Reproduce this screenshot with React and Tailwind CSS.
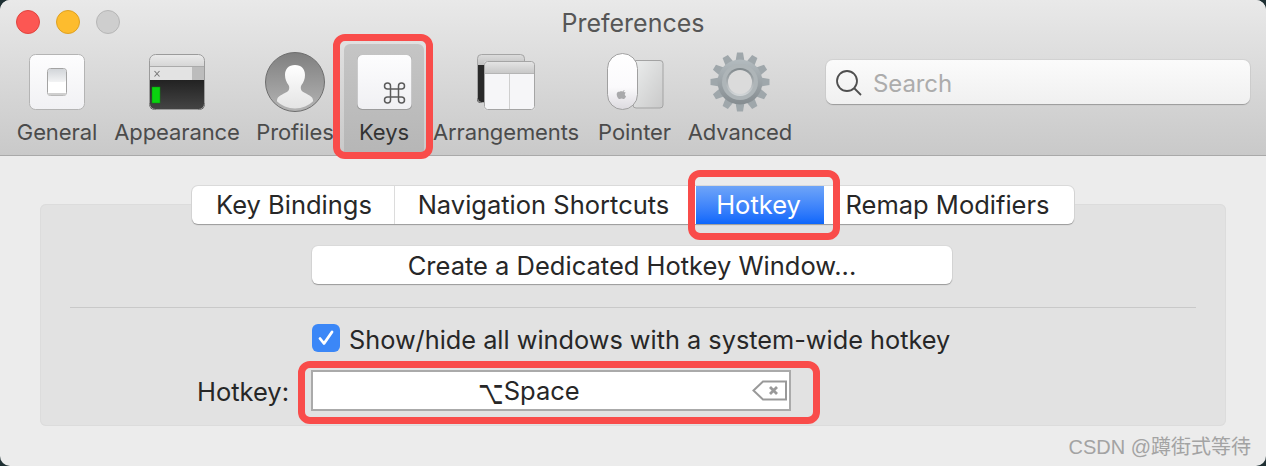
import React from "react";

function GeneralIcon() {
  return (
    <svg width="60" height="60" viewBox="0 0 60 60">
      <defs>
        <linearGradient id="gk" x1="0" y1="0" x2="0" y2="1"><stop offset="0" stopColor="#fdfdfe"/><stop offset="1" stopColor="#f1f1f4"/></linearGradient>
        <linearGradient id="gs" x1="0" y1="0" x2="0" y2="1"><stop offset="0" stopColor="#d2d5d9"/><stop offset="1" stopColor="#f2f3f4"/></linearGradient>
      </defs>
      <rect x="2.5" y="2.5" width="55" height="55" rx="6" fill="url(#gk)" stroke="#b4b4b4"/>
      <rect x="20.5" y="16.5" width="19" height="27" rx="3" fill="#fff" stroke="#a3a3a3"/>
      <rect x="21" y="17" width="18" height="13" rx="2.5" fill="url(#gs)"/>
      <rect x="21" y="41" width="18" height="2.5" rx="1" fill="#cfcfcf"/>
    </svg>
  );
}

function AppearanceIcon() {
  return (
    <svg width="60" height="60" viewBox="0 0 60 60">
      <defs>
        <linearGradient id="at" x1="0" y1="0" x2="0" y2="1"><stop offset="0" stopColor="#ececec"/><stop offset="1" stopColor="#d4d4d4"/></linearGradient>
        <linearGradient id="ad" x1="0" y1="0" x2="0" y2="1"><stop offset="0" stopColor="#222"/><stop offset="1" stopColor="#454545"/></linearGradient>
        <clipPath id="ac"><rect x="2" y="2" width="56" height="56" rx="6"/></clipPath>
      </defs>
      <g clipPath="url(#ac)">
        <rect x="2" y="2" width="56" height="13" fill="url(#at)"/>
        <rect x="2" y="14" width="44" height="14" fill="#e3e3e3"/>
        <rect x="45" y="14" width="13" height="14" fill="#bcbcbc"/>
        <rect x="2" y="14" width="56" height="1" fill="#aaa"/>
        <rect x="2" y="28" width="56" height="30" fill="url(#ad)"/>
      </g>
      <rect x="2.5" y="2.5" width="55" height="55" rx="6" fill="none" stroke="#9b9b9b"/>
      <path d="M7.5 19l5 5.5m0-5.5l-5 5.5" stroke="#777" strokeWidth="1.1"/>
      <rect x="5" y="35" width="8" height="16" fill="#0ad30f" stroke="#0b8f0f" strokeWidth="0.5"/>
    </svg>
  );
}

function ProfileIcon() {
  return (
    <svg width="60" height="60" viewBox="0 0 60 60">
      <defs>
        <linearGradient id="pb" x1="0" y1="0" x2="0" y2="1"><stop offset="0" stopColor="#7f7f7f"/><stop offset="1" stopColor="#b4b4b4"/></linearGradient>
        <linearGradient id="pw" x1="0" y1="0" x2="0" y2="1"><stop offset="0" stopColor="#ffffff"/><stop offset="1" stopColor="#e2e2e2"/></linearGradient>
        <clipPath id="pc"><circle cx="30" cy="30" r="26.500"/></clipPath>
      </defs>
      <circle cx="30" cy="30" r="29.500" fill="url(#pb)" stroke="#6e6e6e"/>
      <g clipPath="url(#pc)">
        <path d="M30 13c-6.500 0-10 4-10 10 0 4 1.500 7.500 3.500 10 1 1.500 1 4 0 5.500-2 2.500-8 4-10.500 7-1.500 2-1.500 6 0 14h34c1.500-8 1.500-12 0-14-2.500-3-8.500-4.500-10.500-7-1-1.500-1-4 0-5.500 2-2.500 3.500-6 3.500-10 0-6-3.500-10-10-10z" fill="url(#pw)"/>
      </g>
    </svg>
  );
}

function KeyIcon() {
  return (
    <svg width="60" height="60" viewBox="0 0 60 60">
      <defs>
        <linearGradient id="kk" x1="0" y1="0" x2="0" y2="1"><stop offset="0" stopColor="#fdfdfe"/><stop offset="1" stopColor="#f0f0f3"/></linearGradient>
      </defs>
      <rect x="3" y="3" width="55" height="55" rx="5" fill="#9c9c9c"/>
      <rect x="3.500" y="3" width="54" height="54" rx="5" fill="url(#kk)"/>
      <path
        d="M36.500 37h8v8h-8zM36.500 37h-3a3 3 0 1 1 3-3zM44.500 37h3a3 3 0 1 0-3-3zM36.500 45h-3a3 3 0 1 0 3 3zM44.500 45h3a3 3 0 1 1-3 3z"
        fill="none"
        stroke="#5c5c5c"
        strokeWidth="1.500"
      />
    </svg>
  );
}

function ArrangeIcon() {
  return (
    <svg width="60" height="60" viewBox="0 0 60 60">
      <defs>
        <linearGradient id="rt" x1="0" y1="0" x2="0" y2="1"><stop offset="0" stopColor="#dedede"/><stop offset="1" stopColor="#c0c0c0"/></linearGradient>
        <linearGradient id="rb" x1="0" y1="0" x2="0" y2="1"><stop offset="0" stopColor="#e6e6e6"/><stop offset="1" stopColor="#c8c8c8"/></linearGradient>
        <clipPath id="rc"><rect x="1" y="2" width="48" height="49" rx="4"/></clipPath>
        <clipPath id="rf"><rect x="8" y="9" width="51" height="49" rx="3"/></clipPath>
      </defs>
      <g clipPath="url(#rc)">
        <rect x="1" y="2" width="48" height="12" fill="url(#rt)"/>
        <rect x="1" y="13" width="12" height="38" fill="#2a2a2a"/>
      </g>
      <rect x="1.500" y="2.500" width="47" height="48" rx="4" fill="none" stroke="#a5a5a5"/>
      <g clipPath="url(#rf)">
        <rect x="8" y="9" width="51" height="49" fill="#f6f6f8"/>
        <rect x="8" y="9" width="51" height="12" fill="url(#rb)"/>
        <rect x="33" y="21" width="1" height="37" fill="#cfcfcf"/>
        <rect x="8" y="21" width="51" height="1" fill="#b5b5b5"/>
      </g>
      <rect x="8.500" y="9.500" width="50" height="48" rx="3" fill="none" stroke="#a5a5a5"/>
    </svg>
  );
}

function PointerIcon() {
  return (
    <svg width="60" height="60" viewBox="0 0 60 60">
      <defs>
        <linearGradient id="mt" x1="0" y1="0" x2="1" y2="1"><stop offset="0" stopColor="#eceeee"/><stop offset="1" stopColor="#c9c9c9"/></linearGradient>
        <linearGradient id="mm" x1="0" y1="0" x2="0" y2="1"><stop offset="0" stopColor="#ffffff"/><stop offset="0.6" stopColor="#fbfafc"/><stop offset="1" stopColor="#dcdadf"/></linearGradient>
      </defs>
      <rect x="28" y="8.500" width="30" height="47.500" rx="3" fill="url(#mt)" stroke="#a3a3a3"/>
      <rect x="2.500" y="1.500" width="30" height="56" rx="15" fill="url(#mm)" stroke="#a0a0a0"/>
      <path d="M17.500 41c1-.6 2.200-.4 3-.1 .5-1 1.200-1.500 2-1.700 0 1-.6 1.800-1.500 2 1.400 0 2.400.3 2.800 1-1.400.8-1.400 3 .2 3.500-.5 1.500-1.500 2.800-2.500 2.800-.9 0-1.300-.5-2-.5s-1.200.5-2 .5c-1.500 0-3-3-3-5 0-1.800 1.200-2.700 2-2.500z" fill="#a9a9ab" transform="translate(-2.500 -.5) scale(.98)"/>
    </svg>
  );
}

function GearIcon() {
  const teeth = [0, 30, 60, 90, 120, 150, 180, 210, 240, 270, 300, 330];
  return (
    <svg width="60" height="60" viewBox="0 0 60 60">
      <defs>
        <linearGradient id="ga" x1="0" y1="0" x2="0" y2="1"><stop offset="0" stopColor="#b3bbbf"/><stop offset="1" stopColor="#858c90"/></linearGradient>
        <linearGradient id="gb" x1="0" y1="0" x2="0" y2="1"><stop offset="0" stopColor="#7f878b"/><stop offset="1" stopColor="#d4d8da"/></linearGradient>
      </defs>
      {teeth.map((a) => (
        <path key={a} d="M27 0.500h6l1.500 9h-9z" fill="#9fa7ab" transform={`rotate(${a} 30 30)`} />
      ))}
      <circle cx="30" cy="30" r="22.500" fill="url(#ga)"/>
      <circle cx="30" cy="30" r="18" fill="#aeb5b8"/>
      <circle cx="30" cy="30" r="14" fill="url(#gb)"/>
      <circle cx="30" cy="30" r="12" fill="#dbdbdb"/>
    </svg>
  );
}

const tools = [
  { label: "General", cls: "ml-[17px] w-[80px]", Icon: GeneralIcon },
  { label: "Appearance", cls: "ml-[18px] w-[124px]", Icon: AppearanceIcon },
  { label: "Profiles", cls: "ml-[18px] w-[76px]", Icon: ProfileIcon },
  { label: "Keys", cls: "ml-[11px] w-[80px] bg-gradient-to-b from-[#c5c5c5] to-[#b6b6b6] rounded-t-[6px] text-[#333333] relative", Icon: KeyIcon, active: true },
  { label: "Arrangements", cls: "ml-[9px] w-[146px]", Icon: ArrangeIcon },
  { label: "Pointer", cls: "ml-[19px] w-[73px]", Icon: PointerIcon },
  { label: "Advanced", cls: "ml-[18px] w-[102px]", Icon: GearIcon },
];

function Highlight({ cls }) {
  return <div className={`absolute border-[7px] border-[#f94c4a] rounded-[12px] pointer-events-none ${cls}`} />;
}

export default function App() {
  return (
    <div className="w-[1266px] h-[466px] bg-[#1f3033] overflow-hidden font-['Inter','Liberation_Sans',sans-serif]">
      <div className="w-full h-full bg-[#ececec] rounded-[10px] flex flex-col overflow-hidden">
        <header className="h-[156px] shrink-0 flex flex-col border-b border-[#a9a9a9] bg-gradient-to-b from-[#e9e9e9] to-[#c9c9c9]">
          <div className="h-[44px] shrink-0 grid grid-cols-[1fr_auto_1fr] items-center">
            <div className="flex gap-[16px] pl-[16px]">
              <span className="w-[24px] h-[24px] rounded-full bg-[#fc5753] border border-[#e0443e]" />
              <span className="w-[24px] h-[24px] rounded-full bg-[#fdbc2e] border border-[#dea123]" />
              <span className="w-[24px] h-[24px] rounded-full bg-[#cecece] border border-[#b6b6b6]" />
            </div>
            <div className="mt-[2px] text-[25px] leading-[30px] text-[#565656]">Preferences</div>
            <div />
          </div>
          <div className="flex-1 flex">
            {tools.map(({ label, cls, Icon, active }) => (
              <div key={label} className={`flex flex-col items-center pt-[8px] text-[22px] leading-[26px] tracking-[-0.1px] text-[#4b4b4b] ${cls}`}>
                <div className="w-[60px] h-[60px] shrink-0"><Icon /></div>
                <div className="mt-[7px] whitespace-nowrap">{label}</div>
                {active && <Highlight cls="left-[-11px] right-[-9px] top-[-10px] bottom-[-4px]" />}
              </div>
            ))}
            <div className="ml-[35px] mt-[16px] w-[424px] h-[44px] rounded-[7px] bg-gradient-to-b from-[#fbfbfb] to-[#f0f0f0] shadow-[0_1px_1px_#9a9a9a,0_0_0_1px_#d2d2d2] flex items-center pl-[9px] gap-[10px]">
              <svg className="mt-[2px]" width="28" height="28" viewBox="0 0 28 28" fill="none" stroke="#4f4f4f" strokeWidth="1.800">
                <circle cx="12" cy="12" r="10" />
                <path d="M19 19l7 7" />
              </svg>
              <span className="pt-[3px] text-[24px] tracking-[-0.1px] text-[#acacac]">Search</span>
            </div>
          </div>
        </header>
        <main className="flex-1 relative">
          <section className="mt-[48px] mx-[40px] h-[222px] bg-[#e2e2e2] rounded-[6px] shadow-[inset_0_0_0_1px_#dcdcdc] flex flex-col items-start">
            <div className="-mt-[18px] ml-[152px] w-[882px] h-[38px] flex bg-white rounded-[6px] shadow-[0_1px_1px_#9a9a9a,0_0_0_1px_#dadada] text-[25.5px] text-[#272727]">
              <div className="w-[203px] pl-[2px] border-r border-[#dcdcdc] flex items-center justify-center">Key Bindings</div>
              <div className="w-[301px] pr-[4px] flex items-center justify-center">Navigation Shortcuts</div>
              <div className="w-[128px] pr-[3px] bg-gradient-to-b from-[#6ea4f8] to-[#0a66fb] text-white flex items-center justify-center relative">
                Hotkey
                <Highlight cls="left-[-8px] right-[-16px] top-[-16px] bottom-[-16px]" />
              </div>
              <div className="w-[250px] pr-[3px] flex items-center justify-center">Remap Modifiers</div>
            </div>
            <div className="mt-[22px] ml-[272px] w-[640px] h-[38px] pt-[2px] bg-white rounded-[6px] shadow-[0_1px_1px_#9a9a9a,0_0_0_1px_#dadada] flex items-center justify-center text-[25.5px] text-[#272727]">
              Create a Dedicated Hotkey Window...
            </div>
            <div className="mt-[23px] ml-[30px] w-[1126px] h-px bg-[#c9c9c9]" />
            <div className="mt-[16px] ml-[272px] flex items-center gap-[9px] h-[28px] text-[25.3px] text-[#272727]">
              <span className="w-[28px] h-[28px] rounded-[6px] bg-[#3b87f7] flex items-center justify-center">
                <svg width="20" height="20" viewBox="0 0 20 20" fill="none" stroke="#fff" strokeWidth="2.800" strokeLinecap="round" strokeLinejoin="round">
                  <path d="M4 10.500l4 5L16 4" />
                </svg>
              </span>
              <span className="pt-[4px] whitespace-nowrap">Show/hide all windows with a system-wide hotkey</span>
            </div>
            <div className="mt-[17px] flex items-center text-[25.5px] text-[#272727]">
              <span className="pt-[4px] ml-[157px] w-[91px] whitespace-nowrap">Hotkey:</span>
              <div className="ml-[23px] w-[480px] h-[41px] pt-[2px] relative bg-white border-2 border-[#aaaaaa] flex items-center justify-center pr-[44px]">
                <span><span className="inline-block scale-y-150 font-['DejaVu_Sans',sans-serif] text-[22px]">⌥</span>Space</span>
                <svg className="absolute right-[1px] top-[7px]" width="36" height="23" viewBox="0 0 36 23" fill="none">
                  <path d="M1.500 11.500L11 2.500h23v18H11z" stroke="#999" strokeWidth="2" />
                  <path d="M18 8l7 7m0-7l-7 7" stroke="#999" strokeWidth="2.800" />
                </svg>
                <Highlight cls="left-[-15px] right-[-31px] top-[-11px] bottom-[-15px]" />
              </div>
            </div>
          </section>
          <div className="absolute right-[15px] bottom-[7px] text-[20px] leading-[24px] text-[#a3a3a3] whitespace-nowrap font-['Liberation_Sans','Noto_Sans_CJK_SC',sans-serif]">
            CSDN @蹲街式等待
          </div>
        </main>
      </div>
    </div>
  );
}
